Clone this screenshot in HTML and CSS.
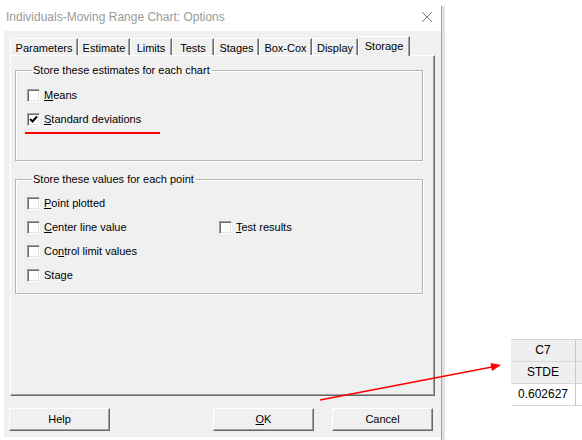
FILE: index.html
```html
<!DOCTYPE html>
<html>
<head>
<meta charset="utf-8">
<link rel="stylesheet" href="styles.css">
</head>
<body>
<div class="screen">
  <div class="dialog">
    <div class="titlebar">
      <span class="title">Individuals-Moving Range Chart: Options</span>
      <svg class="close" width="12" height="12" viewBox="0 0 12 12"><path d="M1 1 L11 11 M11 1 L1 11" stroke="#7a7a7a" stroke-width="1" fill="none"/></svg>
    </div>
    <div class="body">
      <div class="tabs">
        <div class="tab">Parameters</div>
        <div class="tab">Estimate</div>
        <div class="tab">Limits</div>
        <div class="tab">Tests</div>
        <div class="tab">Stages</div>
        <div class="tab">Box-Cox</div>
        <div class="tab">Display</div>
        <div class="tab active">Storage</div>
      </div>
      <div class="panel">
        <fieldset class="group g1">
          <legend>Store these estimates for each chart</legend>
          <div class="row"><span class="cb"></span><span class="lbl"><u>M</u>eans</span></div>
          <div class="row"><span class="cb"><svg width="9" height="9" viewBox="0 0 9 9"><path d="M1 4 L3.5 6.5 L8 1.5" stroke="#000" stroke-width="2" fill="none"/></svg></span><span class="lbl"><u>S</u>tandard deviations</span></div>
        </fieldset>
        <fieldset class="group g2">
          <legend>Store these values for each point</legend>
          <div class="grid">
            <div class="row c1 r1"><span class="cb"></span><span class="lbl"><u>P</u>oint plotted</span></div>
            <div class="row c1 r2"><span class="cb"></span><span class="lbl"><u>C</u>enter line value</span></div>
            <div class="row c2 r2"><span class="cb"></span><span class="lbl"><u>T</u>est results</span></div>
            <div class="row c1 r3"><span class="cb"></span><span class="lbl">Co<u>n</u>trol limit values</span></div>
            <div class="row c1 r4"><span class="cb"></span><span class="lbl">Sta<u>g</u>e</span></div>
          </div>
        </fieldset>
      </div>
      <div class="buttons">
        <div class="btn">Help</div>
        <div class="spacer"></div>
        <div class="btn"><u>O</u>K</div>
        <div class="btn">Cancel</div>
      </div>
    </div>
  </div>
  <div class="frame"></div>
  <div class="sheet">
    <div class="sheet-grid">
      <div class="cell head main">C7</div><div class="cell head"></div>
      <div class="cell head main">STDE</div><div class="cell head"></div>
      <div class="cell data main">0.602627</div><div class="cell data"></div>
    </div>
  </div>
  <svg class="annot" width="582" height="440" viewBox="0 0 582 440">
    <line x1="25" y1="133" x2="160" y2="133" stroke="#ff0000" stroke-width="2"/>
    <line x1="320" y1="400" x2="492" y2="367" stroke="#ff0000" stroke-width="1.5"/>
    <polygon points="501,365 492,371 490.5,363" fill="#ff0000"/>
  </svg>
</div>
</body>
</html>
```

FILE: styles.css
```css
html, body {
  margin: 0;
  padding: 0;
  background: #ffffff;
}
body {
  font-family: "Liberation Sans", Arial, sans-serif;
  font-size: 11px;
  color: #000;
}
.screen {
  position: relative;
  width: 582px;
  height: 440px;
  display: flex;
  overflow: hidden;
}
.dialog {
  width: 441px;
  height: 437px;
  display: flex;
  flex-direction: column;
}
.titlebar {
  height: 31px;
  display: flex;
  align-items: center;
  justify-content: space-between;
  padding: 0 8px 0 6px;
  box-sizing: border-box;
}
.title {
  font-size: 12px;
  color: #9a9a9a;
  margin-top: 3px;
}
.close {
  display: block;
  margin-top: 3px;
}
.body {
  flex: 1;
  margin-left: 4px;
  background: #f0f0f0;
  padding: 5px 6px 6px 6px;
  display: flex;
  flex-direction: column;
}
.tabs {
  display: flex;
  align-items: flex-end;
  height: 19px;
  position: relative;
  z-index: 1;
}
.tab {
  height: 17px;
  box-sizing: border-box;
  border-top: 1px solid #ffffff;
  border-left: 1px solid #ffffff;
  border-right: 1px solid #696969;
  box-shadow: inset -1px 0 0 #a0a0a0;
  padding-top: 3px;
  line-height: 13px;
  text-align: center;
  background: #f0f0f0;
}
.tab:nth-child(1) { width: 68px; }
.tab:nth-child(2) { width: 52px; }
.tab:nth-child(3) { width: 42px; }
.tab:nth-child(4) { width: 42px; }
.tab:nth-child(5) { width: 45px; }
.tab:nth-child(6) { width: 53px; }
.tab:nth-child(7) { width: 46px; }
.tab.active {
  width: 52px;
  height: 20px;
  margin-bottom: -1px;
  padding-top: 3px;
}
.panel {
  flex: 1;
  box-sizing: border-box;
  border-top: 1px solid #ffffff;
  border-left: 1px solid #ffffff;
  border-right: 1px solid #696969;
  border-bottom: 1px solid #696969;
  box-shadow: inset -1px -1px 0 #a0a0a0;
  padding: 0 11px 0 4px;
  display: flex;
  flex-direction: column;
}
.group {
  margin: 0;
  border: 1px solid #b4b4b4;
  box-shadow: 1px 1px 0 #ffffff, inset 1px 1px 0 #ffffff;
  padding: 0 0 0 11px;
  min-width: 0;
}
.group legend {
  padding: 0 2px 0 1px;
  margin-left: 5px;
  line-height: 13px;
}
.g1 {
  margin-top: 8px;
  padding-top: 6px;
  padding-bottom: 29px;
}
.g2 {
  margin-top: 12px;
  padding-top: 5px;
  padding-bottom: 6px;
}
.row {
  height: 24px;
  display: flex;
  align-items: center;
  gap: 4px;
}
.lbl {
  line-height: 13px;
}
.cb {
  width: 13px;
  height: 13px;
  box-sizing: border-box;
  background: #ffffff;
  border-top: 1px solid #a0a0a0;
  border-left: 1px solid #a0a0a0;
  border-right: 1px solid #ffffff;
  border-bottom: 1px solid #ffffff;
  box-shadow: inset 1px 1px 0 #696969, inset -1px -1px 0 #e3e3e3;
  display: flex;
  align-items: center;
  justify-content: center;
  flex: none;
}
.cb svg {
  display: block;
}
.grid {
  display: grid;
  grid-template-columns: 192px 1fr;
  grid-auto-rows: 24px;
}
.c1 { grid-column: 1; }
.c2 { grid-column: 2; }
.r1 { grid-row: 1; }
.r2 { grid-row: 2; }
.r3 { grid-row: 3; }
.r4 { grid-row: 4; }
.buttons {
  display: flex;
  height: 23px;
  margin: 12px 2px 0 -1px;
  gap: 18px;
}
.spacer {
  flex: 1;
}
.btn {
  width: 101px;
  height: 23px;
  box-sizing: border-box;
  border-top: 1px solid #ffffff;
  border-left: 1px solid #ffffff;
  border-right: 1px solid #696969;
  border-bottom: 1px solid #696969;
  box-shadow: inset -1px -1px 0 #a0a0a0;
  background: #f0f0f0;
  display: flex;
  align-items: center;
  justify-content: center;
  line-height: 13px;
}
.frame {
  width: 4px;
  margin-top: 6px;
  box-sizing: border-box;
  border-left: 1px solid #a0a0a0;
  background: #e2e2e2;
}
.sheet {
  flex: 1;
  padding: 339px 0 0 66px;
}
.sheet-grid {
  display: grid;
  grid-template-columns: 65px 1fr;
  border-top: 1px solid #d4d4d4;
}
.cell {
  height: 22px;
  box-sizing: border-box;
  border-bottom: 1px solid #d8d8d8;
  font-size: 12px;
  line-height: 21px;
  text-align: center;
}
.cell.main {
  border-right: 1px solid #c8c8c8;
}
.head {
  background: #efefef;
}
.data {
  background: #ffffff;
}
.annot {
  position: absolute;
  left: 0;
  top: 0;
  pointer-events: none;
}
```
